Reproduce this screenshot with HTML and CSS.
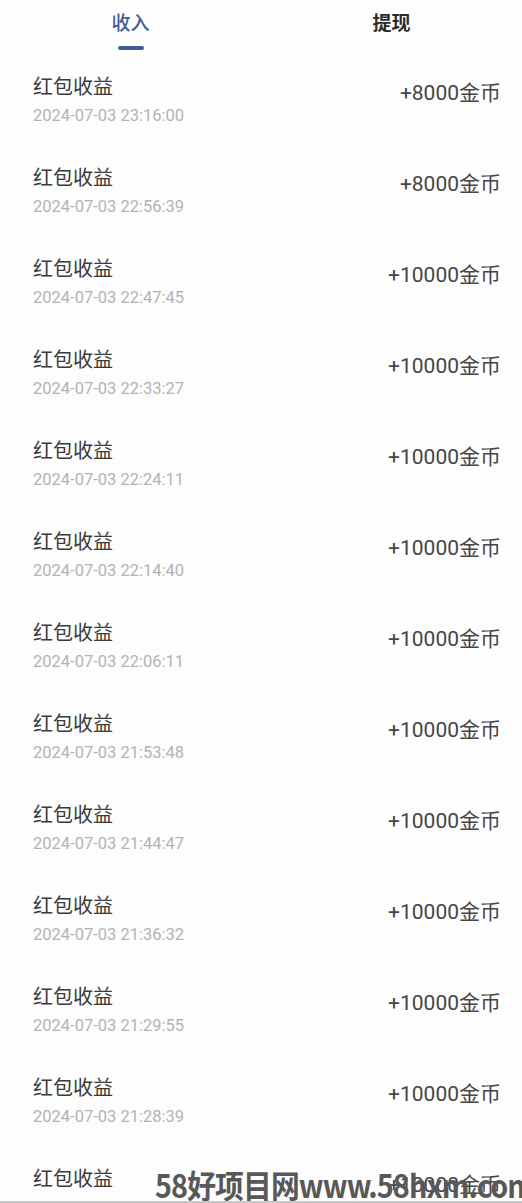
FILE: index.html
```html
<!DOCTYPE html>
<html lang="zh-CN">
<head>
<meta charset="utf-8">
<title>收入</title>
<link rel="stylesheet" href="styles.css">
</head>
<body>
<div class="page">
  <div class="tabs">
    <div class="tab active"><span class="tab-label">收入</span><span class="tab-line"></span></div>
    <div class="tab"><span class="tab-label">提现</span></div>
  </div>
  <ul class="list">
    <li class="row"><div class="info"><div class="title">红包收益</div><div class="date">2024-07-03 23:16:00</div></div><div class="amount">+8000金币</div></li>
    <li class="row"><div class="info"><div class="title">红包收益</div><div class="date">2024-07-03 22:56:39</div></div><div class="amount">+8000金币</div></li>
    <li class="row"><div class="info"><div class="title">红包收益</div><div class="date">2024-07-03 22:47:45</div></div><div class="amount">+10000金币</div></li>
    <li class="row"><div class="info"><div class="title">红包收益</div><div class="date">2024-07-03 22:33:27</div></div><div class="amount">+10000金币</div></li>
    <li class="row"><div class="info"><div class="title">红包收益</div><div class="date">2024-07-03 22:24:11</div></div><div class="amount">+10000金币</div></li>
    <li class="row"><div class="info"><div class="title">红包收益</div><div class="date">2024-07-03 22:14:40</div></div><div class="amount">+10000金币</div></li>
    <li class="row"><div class="info"><div class="title">红包收益</div><div class="date">2024-07-03 22:06:11</div></div><div class="amount">+10000金币</div></li>
    <li class="row"><div class="info"><div class="title">红包收益</div><div class="date">2024-07-03 21:53:48</div></div><div class="amount">+10000金币</div></li>
    <li class="row"><div class="info"><div class="title">红包收益</div><div class="date">2024-07-03 21:44:47</div></div><div class="amount">+10000金币</div></li>
    <li class="row"><div class="info"><div class="title">红包收益</div><div class="date">2024-07-03 21:36:32</div></div><div class="amount">+10000金币</div></li>
    <li class="row"><div class="info"><div class="title">红包收益</div><div class="date">2024-07-03 21:29:55</div></div><div class="amount">+10000金币</div></li>
    <li class="row"><div class="info"><div class="title">红包收益</div><div class="date">2024-07-03 21:28:39</div></div><div class="amount">+10000金币</div></li>
    <li class="row"><div class="info"><div class="title">红包收益</div></div><div class="amount">+10000金币</div></li>
  </ul>
  <div class="watermark">58好项目网www.58hxm.com</div>
  <div class="bottom-line"></div>
</div>
</body>
</html>
```
FILE: styles.css
```css
html, body {
  margin: 0;
  padding: 0;
  background: #ffffff;
  overflow: hidden;
}
.page {
  position: relative;
  width: 522px;
  height: 1203px;
  overflow: hidden;
  font-family: "Noto Sans CJK SC", "Noto Sans", sans-serif;
  background: #fdfdfd;
}
.tabs {
  display: grid;
  grid-template-columns: 1fr 1fr;
  height: 62px;
}
.tab {
  display: flex;
  flex-direction: column;
  align-items: center;
  padding-top: 8px;
}
.tab-label {
  font-size: 19px;
  line-height: 28px;
  font-weight: 700;
  color: #2b2b2b;
}
.tab.active .tab-label {
  color: #3e5f98;
  font-weight: 500;
}
.tab-line {
  display: block;
  width: 26px;
  height: 4px;
  margin-top: 10px;
  border-radius: 2px;
  background: #3e5f98;
}
.list {
  list-style: none;
  margin: 0;
  padding: 0;
}
.row {
  display: flex;
  justify-content: space-between;
  align-items: flex-start;
  height: 91px;
  box-sizing: border-box;
  padding: 10px 21px 0 33px;
}
.title {
  font-size: 20px;
  line-height: 28px;
  color: #3a3a3a;
  font-weight: 400;
}
.date {
  margin-top: 4px;
  font-family: Roboto, "Noto Sans", sans-serif;
  font-size: 16.5px;
  line-height: 24px;
  color: #b3b3b3;
}
.amount {
  margin-top: 7px;
  font-family: Roboto, "Noto Sans CJK SC", sans-serif;
  font-size: 21px;
  line-height: 28px;
  color: #454545;
}
.watermark {
  position: absolute;
  left: 155px;
  bottom: 0;
  font-family: "Noto Sans CJK SC", sans-serif;
  font-weight: 700;
  font-size: 32px;
  line-height: 38px;
  letter-spacing: -1px;
  color: #585858;
  white-space: nowrap;
  transform: scaleX(0.9);
  transform-origin: left bottom;
}
.bottom-line {
  position: absolute;
  left: 0;
  right: 0;
  bottom: 0;
  height: 2px;
  background: #c8c8c8;
}
```
